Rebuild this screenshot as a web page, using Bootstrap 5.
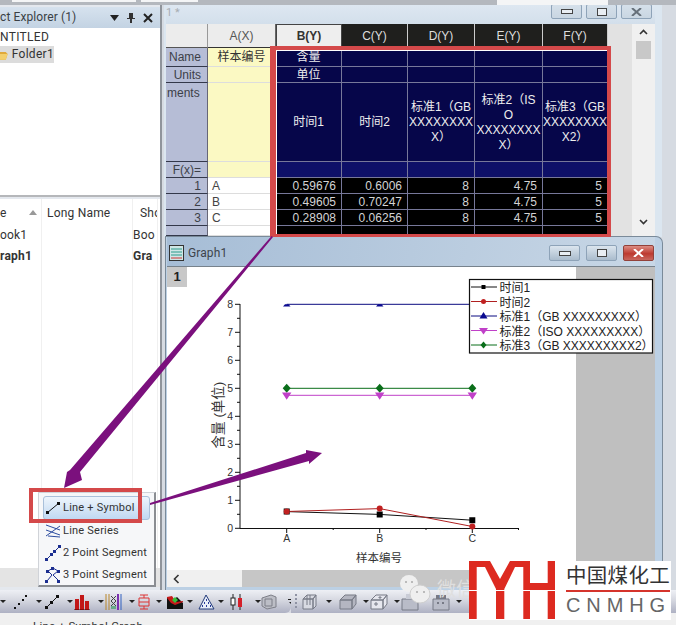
<!DOCTYPE html>
<html lang="zh">
<head>
<meta charset="utf-8">
<title>Origin</title>
<link href="https://cdn.jsdelivr.net/npm/bootstrap@5.3.0/dist/css/bootstrap.min.css" rel="stylesheet">
<style>
html,body{margin:0;padding:0;background:#a9abae;}
.desk{position:relative;width:676px;height:625px;overflow:hidden;background:#a9abae;font-family:Roboto,"Noto Sans CJK SC",sans-serif;font-size:11.5px;color:#333;}
.topstrip{height:5px;background:#b4b8be;position:relative;flex:none;}
.topfield{position:absolute;top:0;background:#f4f5f6;}
.tf1{left:12px;width:124px;height:2px}.tf2{left:141px;width:57px;height:2px}.tf3{left:497px;width:111px;height:5px}
.mainrow{flex:1 1 auto;min-height:0;background:#d6dbe2;}
.leftpane{width:162px;background:#e4e8ee;border-right:2px solid #8f949b;overflow:hidden;flex:none;}
.panehead{height:21px;margin-top:2px;background:linear-gradient(#d6e2ee,#c3d3e3);padding-right:7px;line-height:21px;letter-spacing:.1px;color:#3a3f45;font-size:12px;}
.panehead svg{display:block}
.treebox{height:169px;background:#fff;border-bottom:2px solid #b5b7ba;padding-top:1px;line-height:17px;font-size:12px;letter-spacing:.3px;}
.treefolder{width:54px;height:17px;background:#dcdcdc;margin-top:0;}
.listbox{flex:1 1 auto;background:#fff;letter-spacing:.2px;display:grid;grid-template-columns:42px 91px 25px;grid-template-rows:26px 21px 20px 1fr;margin-top:2px;min-height:0;font-size:12px;}
.listbox>div{border-right:1px solid #f0f0f0;padding-left:0;line-height:20px;white-space:nowrap;overflow:hidden;color:#333;}
.lhead{line-height:28px!important;}
.lhead.lc2{padding-left:5px}.lhead.lc3,.lc3{padding-left:7px}
.lc2{padding-left:5px}
.sorttri{display:inline-block;width:0;height:0;border-left:4px solid transparent;border-right:4px solid transparent;border-bottom:5px solid #999;margin-left:22px;vertical-align:2px;}
.listscroll{height:19px;background:#e4e4e4;margin-bottom:3px;flex:none;}
.win{position:absolute;display:flex;flex-direction:column;overflow:hidden;}
.bookwin{left:164px;top:5px;width:498px;height:232px;background:#dbe6f0;padding:0 7px 0 2px;}
.booktitle{height:19px;flex:none;background:linear-gradient(#dde7f1,#d3dfeb);color:#a8adb3;font-size:11px;line-height:15px;padding:0 3px 0 0;}
.capbtn{width:31px;height:16px;border:1px solid #8ea3b8;border-radius:2px;background:linear-gradient(#dbe5ee,#aabccd);display:flex;align-items:center;justify-content:center;flex:none;}
.booktitle .capbtn{height:15px;margin-top:-1px;background:linear-gradient(#d5e0ea,#c9d6e2);}
.bookbody{flex:1 1 auto;background:#e2e2e2;min-height:0;}
.sheet{display:grid;grid-template-columns:42px 68px 66px 66px 67px 68px 65px;grid-template-rows:24px 19px 16px 79px 16px 16px 16px 16px 10px;width:382px;flex:none;font-family:"Liberation Sans","Noto Sans CJK SC",sans-serif;font-size:12px;line-height:15px;background:#06064a;}
.sheet>div{display:flex;align-items:center;justify-content:center;text-align:center;padding:1px 2px 0;overflow:hidden;white-space:nowrap;}
.c-corner{background:#ececec;border-right:1px solid #999;border-bottom:1px solid #555;}
.c-hA{background:#ececec;color:#555;border-right:1px solid #666;border-bottom:1px solid #333;}
.c-hB{background:#eee;color:#333;font-weight:bold;border:1px solid #444;}
.c-hD{background:#1f1f1d;color:#ddd;border-right:1px solid #ccc;}
.c-r{background:#b6bdd6;color:#3c4048;border-right:1px solid #667;border-bottom:1px solid #33384a;justify-content:flex-end!important;padding-right:6px!important;}
.c-r.top{align-items:flex-start!important;justify-content:flex-start!important;padding-left:1px!important;padding-top:3px!important;}
.c-y{background:#fbf9c3;color:#333;border-right:1px solid #ddd;border-bottom:1px solid #ddd;}
.c-n{background:#06064a;color:#eee;border-right:1px solid #77789a;border-bottom:1px solid #77789a;}
.c-f{background:#0e1068;border-right:1px solid #77789a;border-bottom:1px solid #77789a;}
.c-w{background:#fff;color:#444;justify-content:flex-start!important;padding-left:4px!important;border-right:1px solid #ccc;border-bottom:1px solid #ddd;}
.c-d{background:#000;color:#d4d4d4;justify-content:flex-end!important;padding-right:5px!important;border-right:1px solid #77789a;border-bottom:1px solid #77789a;}
.vscroll{width:23px;flex:none;background:#f0f0f0;padding-top:17px;margin-left:auto;}
.vthumb{width:15px;height:18px;margin:0 auto;background:#c8c8c8;}
.graphwin{left:165px;top:236px;width:498px;height:354px;background:#bcd0e4;border:1px solid #7a8a99;border-bottom:0;border-radius:0 7px 0 0;padding:0 7px 3px 1px;}
.graphtitle{height:30px;flex:none;background:linear-gradient(100deg,#a6bdd6,#c8d7e6);color:#3d444b;padding:3px 1px 0 2px;gap:3px;font-size:12px;letter-spacing:.1px;border-bottom:1px solid #77828c;}
.capbtn.closer{background:linear-gradient(#dc8d84,#bd3a30 55%,#c8675e);border-color:#92413a;}
.graphbody{position:relative;flex:1 1 auto;background:#bfbfbf;min-height:0;}
.graphbody svg{display:block}
.hscroll{height:17px;flex:none;background:#f0f0f0;padding-left:6px;}
.hthumb{width:335px;height:17px;background:#c6c6c6;margin-left:62px;}
.pagetab{position:absolute;left:0;top:0;width:20px;height:20px;background:#c8c8c8;color:#222;font:bold 13px/20px "Liberation Sans",sans-serif;text-align:center;}
.toolbar{height:23px;flex:none;background:#d9dbe3;}
.tbgroup{height:23px;background:linear-gradient(#eef0f5,#d5d7e0 45%,#aeb1c3);}
.tb1{width:291px;border-radius:0 0 6px 0;padding-left:0;}
.tb2{flex:1 1 auto;padding-left:3px;}
.tbi{width:31px;flex:none;gap:2px;}
.tbi svg{flex:none;display:block}
.tbcaret{width:0;height:0;border-left:3px solid transparent;border-right:3px solid transparent;border-top:3px solid #222;flex:none;}
.statusbar{height:12px;flex:none;background:#f0f0f0;color:#333;padding:6px 0 0 33px;line-height:14px;font-size:11.5px;letter-spacing:.25px;overflow:hidden;white-space:nowrap;}
.popmenu{position:absolute;left:38px;top:492px;width:118px;height:95px;background:#f6f7f9;border:1px solid #d0d3d8;border-right:2px solid #8a8d92;border-bottom:2px solid #8a8d92;padding:3px 4px;font-size:11px;letter-spacing:.22px;color:#333;}
.popitem{height:22px;gap:2px;white-space:nowrap;}
.popitem.sel{height:24px;background:linear-gradient(#eef5fc,#c0d8f2);border:1px solid #a9c0da;border-radius:3px;margin-bottom:-1px;padding-left:1px;}
.popitem svg{flex:none;display:block}
.popitem:not(.sel){padding-left:2px;}
.popitem:nth-child(2){margin-top:1px}
.redframe{position:absolute;border:4px solid #d4494a;pointer-events:none;}
.rf1{left:270px;top:46px;width:341px;height:191px;border-width:4px 4px 3px 6px;box-shadow:inset 0 1px 0 #fff,inset 1px 0 0 #fff;}
.rf2{left:29px;top:488px;width:113px;height:35px;}
.overlay{position:absolute;left:0;top:0;pointer-events:none;}
.wechat{position:absolute;left:400px;top:575px;width:70px;height:30px;color:#dfdfdf;font-size:19px;line-height:24px;}
.wechat svg{position:absolute;left:0;top:0}
.wechat span{position:absolute;left:37px;top:3px;white-space:nowrap}
.logobox{position:absolute;left:469px;top:561px;width:202px;height:59px;background:#fff;}
.logotext{width:115px;padding-left:10px;flex:none;}
.logocn{color:#333;font-size:20.5px;line-height:26px;margin-top:2px;white-space:nowrap;letter-spacing:.3px;}
.logorule{height:2px;background:#d5342c;margin-top:1px;width:104px;}
.logoen{color:#666;font-family:"Liberation Sans",sans-serif;font-size:20px;line-height:24px;margin-top:1px;letter-spacing:5.9px;white-space:nowrap;}
</style>
</head>
<body>
<div class="desk d-flex flex-column">
  <div class="topstrip"><div class="topfield tf1"></div><div class="topfield tf2"></div><div class="topfield tf3"></div></div>
  <div class="mainrow d-flex">
    <div class="leftpane d-flex flex-column">
      <div class="panehead d-flex align-items-center gap-2">
        <span class="flex-grow-1 text-nowrap">ct Explorer (1)</span>
        <svg width="9" height="6" viewBox="0 0 9 6"><path d="M0 0h9L4.5 6z" fill="#222"/></svg>
        <svg width="8" height="10" viewBox="0 0 8 10"><path d="M2 0h4v5h2v1H5v4H3V6H0V5h2z" fill="#333"/></svg>
        <svg width="10" height="10" viewBox="0 0 10 10"><path d="M1 1l8 8M9 1l-8 8" stroke="#222" stroke-width="2"/></svg>
      </div>
      <div class="treebox">
        <div class="ps-0">NTITLED</div>
        <div class="treefolder d-flex align-items-center gap-1">
          <svg width="8" height="11" viewBox="0 0 8 11"><path d="M0 3h6l2 2-2 6H0z" fill="#e0a93a"/><path d="M0 5h8l-2 6H0z" fill="#f3cf6d"/></svg>
          <span>Folder1</span>
        </div>
      </div>
      <div class="listbox">
        <div class="lhead">e<span class="sorttri"></span></div>
        <div class="lhead lc2">Long Name</div>
        <div class="lhead lc3">Sho</div>
        <div>ook1</div><div class="lc2"></div><div class="lc3">Boo</div>
        <div class="fw-bold">raph1</div><div class="lc2"></div><div class="lc3 fw-bold">Gra</div>
        <div></div><div></div><div></div>
      </div>
      <div class="listscroll"></div>
    </div>
  </div>
  <div class="toolbar d-flex">
    <div class="tbgroup tb1 d-flex align-items-center">
      <div class="tbi d-flex align-items-center" style="width:12px"><span class="tbcaret"></span></div>
      <div class="tbi d-flex align-items-center"><svg width="18" height="16" viewBox="0 0 18 16"><path d="M2 13h2v2H2zM6 9h2v2H6zM10 5h2v2h-2zM13 1h2v2h-2z" fill="#111"/></svg><span class="tbcaret ms-1"></span></div>
      <div class="tbi d-flex align-items-center"><svg width="18" height="16" viewBox="0 0 18 16"><path d="M3 14L15 2" stroke="#111"/><path d="M2 12h3v3H2zM7 7h3v3H7zM13 1h3v3h-3z" fill="#111"/></svg><span class="tbcaret ms-1"></span></div>
      <div class="tbi d-flex align-items-center"><svg width="18" height="16" viewBox="0 0 18 16"><path d="M1 5h4v11H1zM6 1h4v15H6zM11 7h4v9h-4z" fill="#c21818"/><path d="M0 16h16" stroke="#400" /></svg><span class="tbcaret ms-1"></span></div>
      <div class="tbi d-flex align-items-center"><svg width="18" height="16" viewBox="0 0 18 16"><path d="M1 0v16M4 0v16" stroke="#b8862a"/><path d="M13 0v16" stroke="#7b30b0" stroke-width="2"/><path d="M16 0v16" stroke="#3060c0"/><path d="M6 2l5 5-5 5M11 2L6 7l5 5" stroke="#444" fill="none"/><path d="M6 12h5v3H6z" fill="#6a8"/></svg><span class="tbcaret ms-1"></span></div>
      <div class="tbi d-flex align-items-center"><svg width="18" height="16" viewBox="0 0 18 16"><path d="M4 1h8M8 1v3M8 12v3M4 15h8M3 4h10v8H3zM3 8h10" stroke="#d33" fill="none"/></svg><span class="tbcaret"></span></div>
      <div class="tbi d-flex align-items-center"><svg width="18" height="16" viewBox="0 0 18 16"><path d="M0 15V3l5 4 5-4 6 6v6z" fill="#111"/><path d="M0 15V4l4 5 4 2 8-3v-1L9 8 5 2 0 3z" fill="#c61a1a"/><path d="M5 6l3-3 3 3-3 3z" fill="#35c13b"/></svg><span class="tbcaret"></span></div>
      <div class="tbi d-flex align-items-center"><svg width="18" height="16" viewBox="0 0 18 16"><path d="M8 1L1 15h15z" fill="#e8eef8" stroke="#223a7a"/><path d="M8 6h1M6 9h1M10 9h1M4 12h1M8 12h1M12 12h1" stroke="#2a3c9a" stroke-width="2"/></svg><span class="tbcaret"></span></div>
      <div class="tbi d-flex align-items-center" style="width:32px"><svg width="16" height="16" viewBox="0 0 16 16"><path d="M4 0v16M11 0v16" stroke="#222"/><rect x="2" y="4" width="4" height="7" fill="#fff" stroke="#222"/><rect x="9" y="4" width="4" height="9" fill="#d5202a"/></svg><span class="tbcaret ms-2"></span></div>
      <div class="tbi d-flex align-items-center" style="width:23px"><svg width="16" height="16" viewBox="0 0 16 16"><path d="M1 4l9-3 5 2v10l-9 2-5-3z" fill="#bcbec6" stroke="#7d7f88"/><path d="M4 5h7v7H4z" fill="none" stroke="#7d7f88"/></svg></div>
      <div class="d-flex flex-column align-items-center ms-1" style="width:8px"><span style="width:7px;border-top:1px solid #222"></span><span class="tbcaret" style="margin-top:2px"></span></div>
    </div>
    <div class="tbgroup tb2 d-flex align-items-center">
      <svg width="4" height="17" viewBox="0 0 4 17"><path d="M1 1h2v2H1zM1 5h2v2H1zM1 9h2v2H1zM1 13h2v2H1z" fill="#8f93a4"/></svg>
      <div class="tbi d-flex align-items-center ms-1" style="width:33px"><svg width="18" height="18" viewBox="0 0 18 18"><path d="M1 6l4-4h9l-3 4zM1 6h10v10H1zM11 6l3-4v11l-3 3zM5 2v10M8 2v10" fill="#d8dae2" stroke="#777a86"/></svg><span class="tbcaret ms-1"></span></div>
      <div class="tbi d-flex align-items-center ms-1" style="width:31px"><svg width="18" height="18" viewBox="0 0 18 18"><path d="M1 7l5-5h11l-4 5zM1 7h12v9H1zM13 7l4-5v9l-4 5z" fill="#b4b6c1" stroke="#777a86"/></svg><span class="tbcaret ms-1"></span></div>
      <div class="tbi d-flex align-items-center"><svg width="18" height="18" viewBox="0 0 18 18"><path d="M1 7l5-5h11l-4 5zM1 7h12v9H1zM13 7l4-5v9l-4 5zM5 10h2v2H5zM9 4h2v1H9z" fill="#e6e7ee" stroke="#777a86"/></svg><span class="tbcaret ms-1"></span></div>
      <div class="tbi d-flex align-items-center"><svg width="18" height="18" viewBox="0 0 18 18"><path d="M1 6h16v11H1z" fill="#b9bcc8" stroke="#777a86"/><path d="M5 1h5v5H5z" fill="#c9ccd6"/></svg></div>
      <div class="tbi d-flex align-items-center"><svg width="18" height="18" viewBox="0 0 18 18"><path d="M1 6h16v11H1z" fill="#b9bcc8" stroke="#777a86"/><path d="M4 2h10v4H4zM5 9h2v2H5zM10 9h2v2h-2z" fill="#777a86"/></svg><span class="tbcaret ms-1"></span></div>
    </div>
  </div>
  <div class="statusbar">Line + Symbol Graph</div>

  <div class="win bookwin">
    <div class="booktitle d-flex justify-content-end gap-1">
      <span class="me-auto">1 *</span>
      <span class="capbtn"><svg width="12" height="5" viewBox="0 0 12 5"><rect x=".5" y=".5" width="11" height="4" fill="#e9eef3" stroke="#444"/></svg></span>
      <span class="capbtn"><svg width="10" height="8" viewBox="0 0 10 8"><rect x=".5" y=".5" width="9" height="7" fill="#e9eef3" stroke="#444" /></svg></span>
      <span class="capbtn"><svg width="11" height="8" viewBox="0 0 11 8"><path d="M1 0l9 8M10 0L1 8" stroke="#66707a" stroke-width="2"/></svg></span>
    </div>
    <div class="bookbody d-flex">
      <div class="sheet">
        <div class="c-corner"></div><div class="c-hA">A(X)</div><div class="c-hB">B(Y)</div><div class="c-hD">C(Y)</div><div class="c-hD">D(Y)</div><div class="c-hD">E(Y)</div><div class="c-hD">F(Y)</div>
        <div class="c-r">Name</div><div class="c-y">样本编号</div><div class="c-n">含量</div><div class="c-n"></div><div class="c-n"></div><div class="c-n"></div><div class="c-n"></div>
        <div class="c-r">Units</div><div class="c-y"></div><div class="c-n">单位</div><div class="c-n"></div><div class="c-n"></div><div class="c-n"></div><div class="c-n"></div>
        <div class="c-r top">ments</div><div class="c-y"></div><div class="c-n">时间1</div><div class="c-n">时间2</div><div class="c-n">标准1（GB<br>XXXXXXXX<br>X）</div><div class="c-n">标准2（IS<br>O<br>XXXXXXXX<br>X）</div><div class="c-n">标准3（GB<br>XXXXXXXX<br>X2）</div>
        <div class="c-r">F(x)=</div><div class="c-y"></div><div class="c-f"></div><div class="c-f"></div><div class="c-f"></div><div class="c-f"></div><div class="c-f"></div>
        <div class="c-r">1</div><div class="c-w">A</div><div class="c-d">0.59676</div><div class="c-d">0.6006</div><div class="c-d">8</div><div class="c-d">4.75</div><div class="c-d">5</div>
        <div class="c-r">2</div><div class="c-w">B</div><div class="c-d">0.49605</div><div class="c-d">0.70247</div><div class="c-d">8</div><div class="c-d">4.75</div><div class="c-d">5</div>
        <div class="c-r">3</div><div class="c-w">C</div><div class="c-d">0.28908</div><div class="c-d">0.06256</div><div class="c-d">8</div><div class="c-d">4.75</div><div class="c-d">5</div>
        <div class="c-r"></div><div class="c-w"></div><div class="c-d"></div><div class="c-d"></div><div class="c-d"></div><div class="c-d"></div><div class="c-d"></div>
      </div>
      <div class="vscroll position-relative">
        <svg class="position-absolute" style="top:5px;left:7px" width="9" height="6" viewBox="0 0 9 6"><path d="M1 5l3.5-3.5L8 5" stroke="#333" stroke-width="1.6" fill="none"/></svg>
        <div class="vthumb"></div>
        <svg class="position-absolute" style="bottom:12px;left:7px" width="9" height="6" viewBox="0 0 9 6"><path d="M1 1l3.5 3.5L8 1" stroke="#333" stroke-width="1.6" fill="none"/></svg>
      </div>
    </div>
  </div>

  <div class="win graphwin">
    <div class="graphtitle d-flex align-items-center">
      <svg width="16" height="16" viewBox="0 0 16 16"><rect x=".5" y=".5" width="14" height="15" fill="#cfe6e6" stroke="#333"/><path d="M2 4h11M2 7h11M2 10h11" stroke="#2a9a8a"/><path d="M2 13h11" stroke="#c33"/></svg>
      <span class="flex-grow-1">Graph1</span>
      <span class="capbtn" style="margin-right:3px"><svg width="12" height="5" viewBox="0 0 12 5"><rect x=".5" y=".5" width="11" height="4" fill="#e9eef3" stroke="#444"/></svg></span>
      <span class="capbtn" style="margin-right:3px"><svg width="10" height="8" viewBox="0 0 10 8"><rect x=".5" y=".5" width="9" height="7" fill="#e9eef3" stroke="#444" /></svg></span>
      <span class="capbtn closer"><svg width="11" height="8" viewBox="0 0 11 8"><path d="M1 0l9 8M10 0L1 8" stroke="#fff" stroke-width="2"/></svg></span>
    </div>
    <div class="graphbody">
      <svg width="489" height="303" viewBox="166 267 489 303" font-family='"Liberation Sans","Noto Sans CJK SC",sans-serif' font-size="10.5" fill="#333">
        <rect x="166" y="267" width="409" height="303" fill="#fff"/>
        <path d="M239 304v224.5H518" fill="none" stroke="#111"/>
        <path d="M234 304.3h5M234 332.3h5M234 360.3h5M234 388.3h5M234 416.3h5M234 444.3h5M234 472.3h5M234 500.3h5M234 528.3h5M236 318.3h3M236 346.3h3M236 374.3h3M236 402.3h3M236 430.3h3M236 458.3h3M236 486.3h3M236 514.3h3M285.7 528v5M378.7 528v5M471.3 528v5M332.2 528v2M425 528v2M517.5 528v2" stroke="#111"/>
        <g text-anchor="end"><text x="232" y="308">8</text><text x="232" y="336">7</text><text x="232" y="364">6</text><text x="232" y="392">5</text><text x="232" y="420">4</text><text x="232" y="448">3</text><text x="232" y="476">2</text><text x="232" y="504">1</text><text x="232" y="532">0</text></g>
        <g text-anchor="middle"><text x="285.7" y="542">A</text><text x="378.7" y="542">B</text><text x="471.3" y="542">C</text></g>
        <text text-anchor="middle" x="378" y="562" font-size="11.5">样本编号</text>
        <text text-anchor="middle" transform="translate(222,415) rotate(-90)" font-size="13.5">含量 (单位)</text>

        <path d="M285.7 304.3H470" stroke="#0a0a80" fill="none"/>
        <path d="M282 306.5h7.5l-2-2.2h-3.5zM375 306.5h7.5l-2-2.2h-3.5z" fill="#0a0a90"/>
        <path d="M285.7 388.3H471.3" stroke="#0a6e1a" fill="none"/>
        <path d="M285.7 383.8l4 4.5-4 4.5-4-4.5zM378.7 383.8l4 4.5-4 4.5-4-4.5zM471.3 383.8l4 4.5-4 4.5-4-4.5z" fill="#0a6e1a"/>
        <path d="M285.7 395.3H471.3" stroke="#c040c8" fill="none"/>
        <path d="M281 392.5h9.4l-4.7 7.2zM374 392.5h9.4l-4.7 7.2zM466.6 392.5H476l-4.7 7.2z" fill="#c040c8"/>
        <path d="M285.7 511.6L378.7 514.4L471.3 520.2" stroke="#111" fill="none"/>
        <path d="M285.7 511.5L378.7 508.6L471.3 526.5" stroke="#b02020" fill="none"/>
        <path d="M375.7 511.4h6v6h-6zM468.3 517.2h6v6h-6zM282.7 508.6h6v6h-6z" fill="#000"/>
        <circle cx="285.7" cy="511.5" r="3" fill="#c02020"/><circle cx="378.7" cy="508.6" r="3" fill="#c02020"/><circle cx="471.3" cy="526.5" r="3" fill="#c02020"/>

        <rect x="468.5" y="279.5" width="183" height="73.5" fill="#fff" stroke="#111" stroke-width="1.2"/>
        <g font-size="12" fill="#222">
          <text x="498.5" y="292">时间1</text>
          <text x="498.5" y="306.500">时间2</text>
          <text x="498.5" y="321">标准1（GB XXXXXXXXX）</text>
          <text x="498.5" y="335.500">标准2（ISO XXXXXXXXX）</text>
          <text x="498.500" y="350">标准3（GB XXXXXXXXX2）</text>
        </g>
        <path d="M470 287h26" stroke="#111"/><path d="M480.500 285h4v4h-4z" fill="#000"/>
        <path d="M470 301.500h26" stroke="#b02020"/><circle cx="482.500" cy="301.500" r="2.500" fill="#c02020"/>
        <path d="M470 316h26" stroke="#0a0a80"/><path d="M482.500 312l4 6.500h-8z" fill="#0a0a90"/>
        <path d="M470 330.500h26" stroke="#c040c8"/><path d="M478 328h9l-4.500 6.500z" fill="#c040c8"/>
        <path d="M470 345h26" stroke="#0a6e1a"/><path d="M482.500 341.500l3 3.500-3 3.500-3-3.500z" fill="#0a6e1a"/>
      </svg>
      <div class="pagetab">1</div>
    </div>
    <div class="hscroll d-flex align-items-center">
      <svg width="7" height="10" viewBox="0 0 7 10"><path d="M5.500 1L1.500 5l4 4" stroke="#333" stroke-width="1.600" fill="none"/></svg>
      <div class="hthumb"></div>
    </div>
  </div>

  <div class="popmenu">
    <div class="popitem sel d-flex align-items-center"><svg width="16" height="14" viewBox="0 0 16 14"><path d="M2 12L14 2" stroke="#111"/><path d="M1 10h3v3H1zM12 1h3v3h-3z" fill="#111"/></svg><span>Line + Symbol</span></div>
    <div class="popitem d-flex align-items-center"><svg width="16" height="14" viewBox="0 0 16 14"><path d="M1 1l14 5M1 6l14 5M1 12L15 2" stroke="#2c4da0" fill="none"/><path d="M3 12l12 1" stroke="#2c4da0"/></svg><span>Line Series</span></div>
    <div class="popitem d-flex align-items-center"><svg width="16" height="16" viewBox="0 0 16 16"><path d="M1 15l5-5M9 7l5-5" stroke="#1c2e90"/><path d="M0 13h3v3H0zM5 8h3v3H5zM8 5h3v3H8zM13 0h3v3h-3z" fill="#1c2e90"/></svg><span>2 Point Segment</span></div>
    <div class="popitem d-flex align-items-center"><svg width="16" height="16" viewBox="0 0 16 16"><path d="M2 14l5-6-4-4 5-3 5 3-5 4 6 6" stroke="#1c2e90" fill="none"/><path d="M0 13h3v3H0zM6 0h3v3H6zM1 3h3v3H1zM12 3h3v3h-3zM12 13h3v3h-3z" fill="#1c2e90"/></svg><span>3 Point Segment</span></div>
  </div>

  <div class="redframe rf1"></div>
  <div class="redframe rf2"></div>

  <svg class="overlay" width="676" height="625" viewBox="0 0 676 625">
    <path d="M271.5 236L273 237L80 472L82 480L64 488L67 472L70 470Z" fill="#7b107d"/>
    <path d="M150 503L306 453L306 450L322 453L309 464L309 461L150 505Z" fill="#7b107d"/>
  </svg>

  <div class="wechat">
    <svg width="32" height="30" viewBox="0 0 32 30"><ellipse cx="9" cy="8.500" rx="9" ry="8.500" fill="#efefef"/><ellipse cx="20" cy="19" rx="10" ry="9" fill="#efefef" stroke="#cfcfcf"/><path d="M5 6h2v2H5zM11 6h2v2h-2zM16 16h2v2h-2zM23 16h2v2h-2z" fill="#bbb"/></svg>
    <span>微信</span>
  </div>

  <div class="logobox d-flex">
    <svg width="87" height="59" viewBox="0 0 87 59" class="flex-none">
      <path d="M0 0H21L31 18L41 0H61V22H78.700V0H86V58H78.700V30H61V58H54.300V6H46L35.300 28V58H27V28L16 6H7.700V58H0Z" fill="#dd2a20"/>
      <path d="M0 29.500h87" stroke="#fff" stroke-width="1"/>
    </svg>
    <div class="logotext">
      <div class="logocn">中国煤化工</div>
      <div class="logorule"></div>
      <div class="logoen">CNMHG</div>
    </div>
  </div>
</div>
</body>
</html>
